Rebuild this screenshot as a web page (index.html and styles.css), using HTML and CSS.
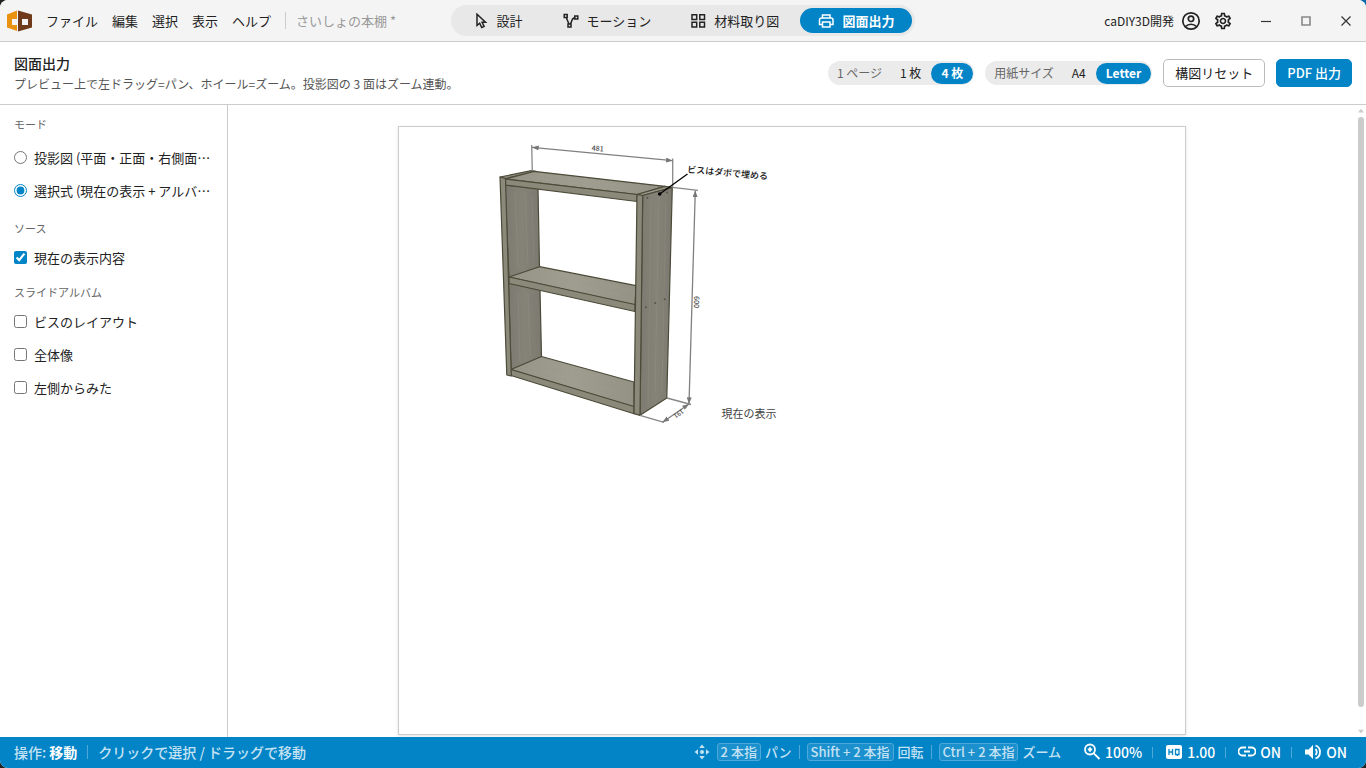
FILE: index.html
```html
<!DOCTYPE html>
<html lang="ja">
<head>
<meta charset="utf-8">
<meta name="viewport" content="width=device-width, initial-scale=1">
<title>caDIY3D - 図面出力</title>
<link rel="stylesheet" href="styles.css">
</head>
<body>
<div class="app">
  <header class="titlebar">
    <div class="titlebar-left">
      <svg class="logo" viewBox="0 0 25 22" aria-hidden="true">
        <path fill="#e8920f" d="M10 .500 0 4.500v13l10 3.500v-6H5V9h5z"/>
        <path fill="#6e3a1b" d="M11 .500V21.500l14-4v-13zm4 8.500h6v6h-6z" fill-rule="evenodd"/>
      </svg>
      <nav class="menu">
        <button type="button">ファイル</button>
        <button type="button">編集</button>
        <button type="button">選択</button>
        <button type="button">表示</button>
        <button type="button">ヘルプ</button>
      </nav>
      <span class="doc-name">さいしょの本棚 *</span>
    </div>
    <nav class="tabs">
      <button type="button" class="tab">
        <svg class="icon" viewBox="0 0 16 16"><path d="M4 1.200v11.300l2.700-2.300 2 4.300 2.400-1.100-2-4.200h3.400z"/></svg>設計</button>
      <button type="button" class="tab">
        <svg class="icon" viewBox="0 0 16 16"><path d="M1.200 1.500h3v3h-3zM11.800 3h3v3h-3zM5 11h3v3H5zM3.200 4.500 6 11M7.500 11l2-5 2.300-1.500"/></svg>モーション</button>
      <button type="button" class="tab">
        <svg class="icon" viewBox="0 0 16 16"><path d="M2 1.800h4.700v4.700H2zM9.800 1.800h4.700v4.700H9.800zM2 9.300h4.700V14H2zM9.800 9.300h4.700V14H9.800z"/></svg>材料取り図</button>
      <button type="button" class="tab active" aria-current="page">
        <svg class="icon" viewBox="0 0 16 16"><path d="M4.500 5V2h7.500v3M4.500 11.500h-3V7a2 2 0 0 1 2-2h9.500a2 2 0 0 1 2 2v4.500h-3M4.500 9h7.500v5H4.500z"/></svg>図面出力</button>
    </nav>
    <div class="titlebar-right">
      <span class="account">caDIY3D開発</span>
      <button type="button" class="tool" aria-label="アカウント">
        <svg class="line" viewBox="0 0 20 20"><circle cx="10" cy="10" r="8.200"/><circle cx="10" cy="7.800" r="2.700"/><path d="M4.500 15.500c3-3 8-3 11 0"/></svg>
      </button>
      <button type="button" class="tool" aria-label="設定">
        <svg viewBox="0 0 24 24"><path d="M19.430 12.980c.04-.32.07-.64.07-.98 0-.34-.03-.66-.07-.98l2.110-1.650c.19-.15.24-.42.12-.64l-2-3.460c-.09-.16-.26-.25-.44-.25-.06 0-.12.01-.17.03l-2.490 1c-.52-.4-1.080-.73-1.690-.98l-.38-2.650C14.460 2.180 14.250 2 14 2h-4c-.25 0-.46.18-.49.42l-.38 2.650c-.61.25-1.170.59-1.690.98l-2.490-1c-.06-.02-.12-.03-.18-.03-.17 0-.34.09-.43.25l-2 3.460c-.13.22-.07.49.12.64l2.110 1.650c-.04.32-.07.65-.07.98 0 .33.03.66.07.98l-2.110 1.650c-.19.15-.24.42-.12.64l2 3.460c.09.16.26.25.44.25.06 0 .12-.01.17-.03l2.490-1c.52.4 1.080.73 1.690.98l.38 2.650c.03.24.24.42.49.42h4c.25 0 .46-.18.49-.42l.38-2.650c.61-.25 1.170-.59 1.690-.98l2.490 1c.06.02.12.03.18.03.17 0 .34-.09.43-.25l2-3.460c.12-.22.07-.49-.12-.64l-2.110-1.650zm-1.980-1.710c.04.31.05.52.05.73 0 .21-.02.43-.05.73l-.14 1.130.89.7 1.080.84-.7 1.210-1.270-.51-1.040-.42-.9.68c-.43.32-.84.56-1.250.73l-1.060.43-.16 1.130-.2 1.350h-1.400l-.19-1.350-.16-1.130-1.060-.43c-.43-.18-.83-.41-1.230-.71l-.91-.7-1.060.43-1.270.51-.7-1.210 1.080-.84.89-.7-.14-1.130c-.03-.31-.05-.54-.05-.74s.02-.43.05-.73l.14-1.130-.89-.7-1.080-.84.7-1.210 1.270.51 1.040.42.9-.68c.43-.32.84-.56 1.250-.73l1.060-.43.16-1.130.2-1.350h1.390l.19 1.350.16 1.130 1.060.43c.43.18.83.41 1.230.71l.91.7 1.060-.43 1.270-.51.7 1.210-1.070.85-.89.7.14 1.130zM12 8c-2.210 0-4 1.790-4 4s1.790 4 4 4 4-1.790 4-4-1.790-4-4-4zm0 6c-1.100 0-2-.9-2-2s.9-2 2-2 2 .9 2 2-.9 2-2 2z"/></svg>
      </button>
      <div class="window-controls">
        <button type="button" aria-label="最小化"><svg viewBox="0 0 12 12"><path d="M1 6.500h10"/></svg></button>
        <button type="button" aria-label="最大化"><svg class="maximize" viewBox="0 0 12 12"><path d="M2 2h8v8H2z"/></svg></button>
        <button type="button" aria-label="閉じる"><svg viewBox="0 0 12 12"><path d="m1.500 1.500 9 9m0-9-9 9"/></svg></button>
      </div>
    </div>
  </header>

  <section class="toolbar">
    <div class="heading">
      <h1>図面出力</h1>
      <p>プレビュー上で左ドラッグ=パン、ホイール=ズーム。投影図の 3 面はズーム連動。</p>
    </div>
    <div class="actions">
      <div class="segment" role="group" aria-label="1 ページ">
        <span>1 ページ</span>
        <button type="button">1 枚</button>
        <button type="button" class="active">4 枚</button>
      </div>
      <div class="segment" role="group" aria-label="用紙サイズ">
        <span>用紙サイズ</span>
        <button type="button">A4</button>
        <button type="button" class="active">Letter</button>
      </div>
      <button type="button" class="btn">構図リセット</button>
      <button type="button" class="btn primary">PDF 出力</button>
    </div>
  </section>

  <main class="workspace">
    <aside class="sidebar">
      <section class="group modes">
        <h2>モード</h2>
        <label class="option"><input type="radio" name="mode"><span>投影図 (平面・正面・右側面図)</span></label>
        <label class="option"><input type="radio" name="mode" checked><span>選択式 (現在の表示 + アルバム)</span></label>
      </section>
      <section class="group">
        <h2>ソース</h2>
        <label class="option"><input type="checkbox" checked><span>現在の表示内容</span></label>
      </section>
      <section class="group">
        <h2>スライドアルバム</h2>
        <label class="option"><input type="checkbox"><span>ビスのレイアウト</span></label>
        <label class="option"><input type="checkbox"><span>全体像</span></label>
        <label class="option"><input type="checkbox"><span>左側からみた</span></label>
      </section>
    </aside>

    <div class="preview">
      <div class="paper">
        <figure class="view">
          <svg class="drawing" viewBox="399 127 393 304" role="img" aria-label="本棚">
            <defs>
              <linearGradient id="side" x1="0" x2="1"><stop offset="0" stop-color="#7d7a71"/><stop offset=".5" stop-color="#858278"/><stop offset="1" stop-color="#7c7970"/></linearGradient>
              <linearGradient id="top" x1="0" x2="1"><stop offset="0" stop-color="#969486"/><stop offset=".5" stop-color="#9f9d8f"/><stop offset="1" stop-color="#949284"/></linearGradient>
              <marker id="arrow" viewBox="0 0 8 6" refX="8" refY="3" markerWidth="7" markerHeight="5" markerUnits="userSpaceOnUse" orient="auto-start-reverse"><path d="M0 0 8 3 0 6z" fill="#777"/></marker>
            </defs>
            <g class="board">
              <path fill="url(#side)" d="M505 185 538 188 539.500 267 509 278z"/>
              <path fill="url(#side)" d="M508.500 283 540 290 541.500 357 511 370z"/>
              <path fill="url(#top)" d="M509 277 539.500 266.700 636 285.700 635 305z"/>
              <path fill="#8b897a" d="M509 277 635 304.500V311.500L509 283.500z"/>
              <path fill="url(#top)" d="M511 369.500 541.500 356.500 634 382V407z"/>
              <path fill="#8b897a" d="M511 369.500 634 406.500V413.700L511 375.500z"/>
              <path fill="#8f8d7e" d="M500 177 531.500 170.700 537 171.500 505.500 178.500z"/>
              <path fill="url(#top)" d="M505.500 179 534 171.300 665 186.300 637 194.500z"/>
              <path fill="#8b897a" d="M505.500 179 637 194.500V201.500L505.500 185z"/>
              <path fill="#8b897a" d="M500 177 505.500 178.500 511.300 376 506.800 375z"/>
              <path fill="#9b998b" d="M637 194.500 665 186.300 672.300 187.300 642.700 195.500z"/>
              <path fill="url(#side)" d="M642.700 195.500 672.300 187.300 666.800 398 640 415.300z"/>
              <path fill="#8b897a" d="M637 194.500 642.700 195.500 640 415.300 634 413.700z"/>
            </g>
            <path class="grain" d="m515 192 3 75m7-74 3 70m4-67 2 66M518 292l2 70m8-68 2 62M540 175l95 13M530 177l90 13M545 271l85 19m-100-15 90 20M545 362l80 23m-95-18 90 26M651 198l-3 208m11-209-4 195m11-199-4 200"/>
            <g class="screws"><circle cx="647.300" cy="197.700" r="1"/><circle cx="667" cy="192.500" r="1"/><circle cx="646" cy="307.300" r="1"/><circle cx="655.300" cy="303" r="1"/><circle cx="664.700" cy="299.300" r="1"/></g>
            <g class="extension">
              <path d="M531.700 145 532.300 171M672.700 158.500V187M672.300 187.300 698 190.300M667 398 691 404.500M640 415.300 664 422.300"/>
            </g>
            <g class="dimension">
              <path d="M532 147.300 672.700 160.700"/><path d="M695.300 190.500 689 404"/><path d="M662.500 422.300 689 404"/>
            </g>
            <path class="leader" d="M659.700 194 687.500 174"/><circle cx="659.700" cy="194" r="1.800"/>
            <text class="measure" transform="translate(597.500 151) rotate(5)">481</text>
            <text class="measure" transform="translate(694 302) rotate(92)">600</text>
            <text class="measure small" transform="translate(677.500 412) rotate(145)">191</text>
            <text class="note" transform="translate(687 172.500) rotate(5)">ビスはダボで埋める</text>
          </svg>
          <figcaption>現在の表示</figcaption>
        </figure>
      </div>
      <div class="scrollbar" aria-hidden="true">
        <svg viewBox="0 0 8 6"><path d="M4 0 8 5H0z"/></svg>
        <i class="thumb"></i>
        <svg viewBox="0 0 8 6"><path d="M0 0h8L4 5z"/></svg>
      </div>
    </div>
  </main>

  <footer class="statusbar">
    <div class="status-left">
      <span>操作: <strong>移動</strong></span>
      <span class="split hint">クリックで選択 / ドラッグで移動</span>
    </div>
    <div class="gestures">
      <svg class="move" viewBox="0 0 16 16"><circle cx="8" cy="8" r="2"/><path d="M8 .5 10.800 4H5.200zM8 15.500 5.200 12h5.600zM.5 8 4 5.200v5.600zM15.500 8 12 10.800V5.200z"/></svg>
      <span class="gesture"><kbd>2 本指</kbd>パン</span>
      <span class="gesture split"><kbd>Shift + 2 本指</kbd>回転</span>
      <span class="gesture split"><kbd>Ctrl + 2 本指</kbd>ズーム</span>
    </div>
    <div class="indicators">
      <button type="button"><svg class="line" viewBox="0 0 18 18"><circle cx="7" cy="6.500" r="5"/><path d="m10.800 10.300 5.700 5.700M4.800 6.500h4.400M7 4.300v4.400"/></svg>100%</button>
      <button type="button"><svg viewBox="0 0 18 18"><rect x="1" y="2" width="16" height="14" rx="2"/><path class="hq" d="M4 6v6M7.500 6v6M4 9h3.500M10.500 6.500H14v5h-3.500zM12.300 11.500V13"/></svg>1.00</button>
      <button type="button"><svg class="line" viewBox="0 0 18 18"><path d="M8 4.500H4.500a4 4 0 0 0 0 8H8M10 4.500h3.500a4 4 0 0 1 0 8H10M6 8.500h6"/></svg>ON</button>
      <button type="button"><svg viewBox="0 0 18 18"><path d="M1 6.500h3.500L9 2v14l-4.500-4.500H1z"/><path class="wave" d="M11.500 6q2.500 3 0 6M11.500 2.500c6 2 6 11 0 13"/></svg>ON</button>
    </div>
  </footer>
</div>
</body>
</html>
```
FILE: styles.css
```css
* { box-sizing: border-box; }

html { background: linear-gradient(to top right, #222 0 70%, #0a69a8 90%); }

body {
  margin: 0;
  font-family: "Noto Sans CJK JP", "Noto Sans", sans-serif;
  font-size: 13px;
  line-height: 20px;
  color: #222;
}

button {
  border: 0;
  padding: 0;
  background: none;
  font: inherit;
  color: inherit;
  white-space: nowrap;
}

h1, h2, p, figure { margin: 0; }
svg { flex: none; }

.app {
  display: flex;
  flex-direction: column;
  height: 100vh;
  overflow: hidden;
  border-radius: 8px;
  background: #fff;
}

.titlebar {
  display: grid;
  grid-template-columns: 1fr auto 1fr;
  align-items: center;
  height: 42px;
  border-bottom: 1px solid #ccc;
  background: #f4f4f4;
}

.titlebar-left { display: flex; align-items: center; padding-left: 7px; }
.logo { width: 25px; height: 22px; }
.menu { display: flex; gap: 14px; padding: 0 14px; }
.doc-name {
  padding-left: 10px;
  border-left: 1px solid #ccc;
  color: #999;
  line-height: 17px;
}

.tabs {
  display: flex;
  gap: 3px;
  padding: 3px;
  border-radius: 16px;
  background: #e8e8e8;
}
.tab {
  display: flex;
  align-items: center;
  justify-content: center;
  gap: 8px;
  min-width: 88px;
  height: 25px;
  padding: 0 18px;
  border-radius: 13px;
}
.tab.active { background: #0284c7; color: #fff; font-weight: 700; }
.icon { width: 16px; height: 16px; fill: none; stroke: currentColor; stroke-width: 1.5; }

.titlebar-right { display: flex; align-items: center; justify-content: flex-end; }
.account { font-size: 12px; padding-right: 1px; }
.tool { display: flex; justify-content: center; width: 32px; }
.tool svg { width: 20px; height: 20px; fill: #222; }
.tool .line { fill: none; stroke: #222; stroke-width: 1.7; }
.window-controls { display: flex; padding-left: 7px; }
.window-controls button { display: flex; justify-content: center; width: 40px; }
.window-controls svg { width: 12px; height: 12px; fill: none; stroke: #333; stroke-width: 1.2; }
.window-controls .maximize { stroke: #888; stroke-width: 1.6; }

.toolbar {
  display: flex;
  align-items: center;
  justify-content: space-between;
  height: 63px;
  padding: 0 14px;
  border-bottom: 1px solid #ccc;
}
.heading h1 { font-size: 14px; line-height: 22px; font-weight: 500; }
.heading p { font-size: 12px; color: #555; }
.actions { display: flex; align-items: center; gap: 11px; }
.segment {
  display: flex;
  align-items: center;
  height: 24px;
  padding: 1px 1px 1px 9px;
  border-radius: 12px;
  background: #ebebeb;
  font-size: 12px;
}
.segment span { padding-right: 8px; color: #666; }
.segment button { height: 21px; padding: 0 10px; border-radius: 11px; }
.segment .active { background: #0284c7; color: #fff; font-weight: 700; }
.btn {
  height: 28px;
  padding: 0 11px;
  border: 1px solid #bbb;
  border-radius: 5px;
  background: #fff;
}
.btn.primary {
  padding: 0 10px;
  border-color: #0284c7;
  background: #0284c7;
  color: #fff;
  font-weight: 500;
}

.workspace { display: flex; flex: 1; min-height: 0; }
.sidebar {
  flex: none;
  width: 228px;
  padding: 11px 14px;
  border-right: 1px solid #ccc;
}
.group { margin-bottom: 10px; }
.group h2 {
  margin-bottom: 5px;
  font-size: 11px;
  line-height: 16px;
  font-weight: 400;
  color: #666;
}
.group.modes { margin-bottom: 13px; }
.group.modes h2 { margin-bottom: 9px; }
.option { display: flex; align-items: center; gap: 7px; height: 33px; }
.option input {
  flex: none;
  width: 13px;
  height: 13px;
  margin: 0 0 1px;
  accent-color: #0284c7;
}
.option span { overflow: hidden; text-overflow: ellipsis; white-space: nowrap; }

.preview { display: flex; flex: 1; min-width: 0; }
.paper {
  display: grid;
  grid-template: 1fr 1fr / 1fr 1fr;
  flex: 0 1 788px;
  aspect-ratio: 788 / 609;
  align-self: flex-start;
  margin: 21px auto 0;
  border: 1px solid #ccc;
  box-shadow: 0 1px 3px rgba(0, 0, 0, 0.12);
}
.view { position: relative; }
.drawing { display: block; width: 100%; }
.view figcaption {
  position: absolute;
  right: 15px;
  bottom: 9px;
  font-size: 11px;
  line-height: 18px;
  color: #444;
}

.board path { stroke: #4c4a38; stroke-width: 1.2; stroke-linejoin: round; }
.grain { fill: none; stroke: #aaa798; stroke-width: 1; opacity: 0.2; }
.screws { fill: #555248; }
.extension path { stroke: #888; stroke-width: 1.3; }
.dimension path { stroke: #808080; stroke-width: 1.3; marker-start: url(#arrow); marker-end: url(#arrow); }
.leader { stroke: #000; stroke-width: 1.3; }
.measure { font-size: 7px; font-weight: 500; fill: #444; text-anchor: middle; }
.measure.small { font-size: 6px; }
.note { font-size: 9px; font-weight: 500; fill: #111; }

.scrollbar {
  display: flex;
  flex-direction: column;
  align-items: center;
  flex: none;
  gap: 3px;
  width: 11px;
  padding: 3px 0 2px;
}
.scrollbar svg { width: 6px; height: 6px; fill: #ccc; }
.thumb { flex: 0 1 590px; width: 6px; border-radius: 3px; background: #ccc; }
.scrollbar svg:last-child { margin-top: auto; }

.statusbar {
  display: flex;
  align-items: center;
  height: 31px;
  padding: 0 19px 1px 14px;
  background: #0284c7;
  color: #c4e2f3;
  font-weight: 500;
  font-kerning: normal;
  white-space: nowrap;
}
.status-left { display: flex; gap: 10px; margin-right: auto; font-size: 14px; }
.status-left strong { color: #fff; font-weight: 700; }
.split { display: flex; align-items: center; }
.split::before {
  content: "";
  width: 1px;
  height: 14px;
  margin-right: 7px;
  background: #4ea9da;
}
.hint::before { margin-right: 10px; }
.gestures { display: flex; align-items: center; gap: 7px; }
.gesture { display: flex; align-items: center; }
.move { width: 16px; height: 16px; fill: #c4e2f3; }
kbd {
  margin-right: 4px;
  padding: 0 3px;
  border: 1px solid #4ea9da;
  border-radius: 3px;
  background: #1b90cd;
  font: inherit;
  font-kerning: normal;
  line-height: 16px;
}
.indicators { display: flex; margin-left: 22px; font-size: 14px; color: #fff; }
.indicators button { display: flex; align-items: center; gap: 4px; font-kerning: normal; }
.indicators button + button::before {
  content: "";
  width: 1px;
  height: 11px;
  margin: 0 8px 0 10px;
  background: #4ea9da;
}
.indicators svg { width: 18px; height: 18px; fill: #fff; }
.indicators .line, .indicators .wave { fill: none; stroke: #fff; stroke-width: 1.8; }
.indicators .hq { fill: none; stroke: #0284c7; stroke-width: 1.3; }
```
